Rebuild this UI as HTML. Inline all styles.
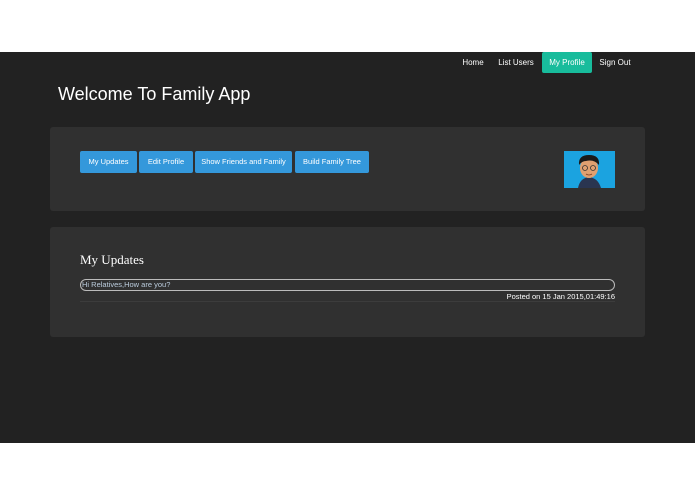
<!DOCTYPE html>
<html><head><style>
*{margin:0;padding:0;box-sizing:border-box}
body{width:695px;height:494px;background:#fff;position:relative;overflow:hidden;font-family:"Liberation Sans",sans-serif}
.main{position:absolute;left:0;top:52px;width:695px;height:391px;background:#222}
.nav a{position:absolute;top:52px;height:21px;line-height:21px;font-size:8px;color:#fff;text-align:center}
h1{position:absolute;left:58px;top:84px;font-size:18px;font-weight:normal;color:#fff}
.panel{position:absolute;left:50px;width:595px;background:#303030;border-radius:3px}
.btn{position:absolute;top:151px;height:22px;line-height:22px;background:#3498db;color:#fff;font-size:7.5px;text-align:center;border-radius:2px}
</style></head><body>
<div class="main"></div>
<div class="nav">
<a style="left:456px;width:34px">Home</a>
<a style="left:494px;width:44px">List Users</a>
<a style="left:542px;width:50px;background:#18bc9c;border-radius:2px">My Profile</a>
<a style="left:596px;width:38px">Sign Out</a>
</div>
<h1>Welcome To Family App</h1>
<div class="panel" style="top:127px;height:84px"></div>
<div class="btn" style="left:80px;width:57px">My Updates</div>
<div class="btn" style="left:139px;width:54px">Edit Profile</div>
<div class="btn" style="left:195px;width:97px">Show Friends and Family</div>
<div class="btn" style="left:295px;width:74px">Build Family Tree</div>
<svg style="position:absolute;left:564px;top:151px" width="51" height="37" viewBox="0 0 51 37">
<rect width="51" height="37" fill="#1ba3e0"/>
<path d="M14 37 Q16 27 25 26 Q34 27 37 37Z" fill="#2a3550"/>
<ellipse cx="25" cy="17" rx="9" ry="10" fill="#e0a070"/>
<path d="M15 14 Q14 4 25 4 Q36 4 35 14 Q30 8 22 10 Q18 10 15 14Z" fill="#1a1a1a"/>
<circle cx="21" cy="17" r="2.5" fill="none" stroke="#333" stroke-width=".8"/>
<circle cx="29" cy="17" r="2.5" fill="none" stroke="#333" stroke-width=".8"/>
<path d="M22 23 Q25 25 28 23" stroke="#7a3b20" fill="none" stroke-width=".8"/>
</svg>
<div class="panel" style="top:227px;height:110px"></div>
<div style="position:absolute;left:80px;top:252px;font-family:'Liberation Serif',serif;font-size:13px;color:#fff">My Updates</div>
<div style="position:absolute;left:80px;top:279px;width:535px;height:12px;border:1px solid #bbb;border-radius:6px;font-size:7.5px;color:#bcd;line-height:10px;padding-left:1px">Hi Relatives,How are you?</div>
<div style="position:absolute;right:80px;top:292px;font-size:7.5px;color:#fff">Posted on 15 Jan 2015,01:49:16</div>
<div style="position:absolute;left:80px;top:301px;width:535px;height:1px;background:#3c3c3c"></div>
</body></html>
